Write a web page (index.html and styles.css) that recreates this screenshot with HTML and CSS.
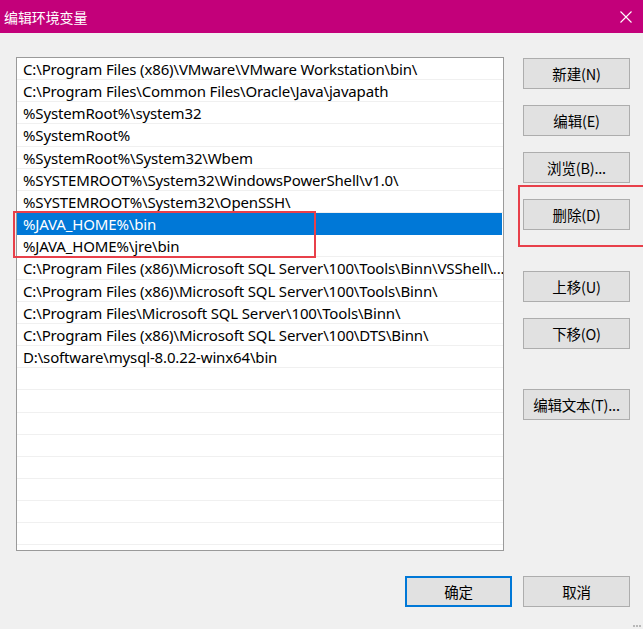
FILE: index.html
```html
<!DOCTYPE html>
<html lang="zh-CN">
<head>
    <meta charset="UTF-8">
    <title>编辑环境变量</title>
    <link rel="stylesheet" href="styles.css">
</head>
<body>
    <div class="window">
        <!-- title bar -->
        <div class="titlebar">
            <span class="title">编辑环境变量</span>
            <svg class="close" width="12" height="12" viewBox="0 0 12 12">
                <path d="M0.5 0.5 L11.5 11.5 M11.5 0.5 L0.5 11.5" stroke="#fff" stroke-width="1.1" fill="none"/>
            </svg>
        </div>

        <div class="content">
            <div class="main">
                <div class="list">
                    <div class="row">C:\Program Files (x86)\VMware\VMware Workstation\bin\</div>
                    <div class="row">C:\Program Files\Common Files\Oracle\Java\javapath</div>
                    <div class="row">%SystemRoot%\system32</div>
                    <div class="row">%SystemRoot%</div>
                    <div class="row">%SystemRoot%\System32\Wbem</div>
                    <div class="row">%SYSTEMROOT%\System32\WindowsPowerShell\v1.0\</div>
                    <div class="row">%SYSTEMROOT%\System32\OpenSSH\</div>
                    <div class="row selected">%JAVA_HOME%\bin</div>
                    <div class="row">%JAVA_HOME%\jre\bin</div>
                    <div class="row">C:\Program Files (x86)\Microsoft SQL Server\100\Tools\Binn\VSShell\...</div>
                    <div class="row">C:\Program Files (x86)\Microsoft SQL Server\100\Tools\Binn\</div>
                    <div class="row">C:\Program Files\Microsoft SQL Server\100\Tools\Binn\</div>
                    <div class="row">C:\Program Files (x86)\Microsoft SQL Server\100\DTS\Binn\</div>
                    <div class="row">D:\software\mysql-8.0.22-winx64\bin</div>
                    <div class="row"></div>
                    <div class="row"></div>
                    <div class="row"></div>
                    <div class="row"></div>
                    <div class="row"></div>
                    <div class="row"></div>
                    <div class="row"></div>
                    <div class="row last"></div>
                </div>

                <div class="side">
                    <div class="group">
                        <button class="btn">新建(N)</button>
                        <button class="btn">编辑(E)</button>
                        <button class="btn">浏览(B)...</button>
                        <button class="btn">删除(D)</button>
                    </div>
                    <div class="group moves">
                        <button class="btn">上移(U)</button>
                        <button class="btn">下移(O)</button>
                    </div>
                    <button class="btn text-btn">编辑文本(T)...</button>
                </div>
            </div>

            <div class="footer">
                <button class="btn primary">确定</button>
                <button class="btn">取消</button>
            </div>
        </div>

        <!-- red annotation boxes -->
        <div class="mark mark-list"></div>
        <div class="mark mark-btn"></div>

        <div class="grip">
            <span></span><span></span><span></span>
        </div>
    </div>
</body>
</html>
```

FILE: styles.css
```css
* {
    margin: 0;
    padding: 0;
    box-sizing: border-box;
}
body {
    width: 643px;
    height: 629px;
    overflow: hidden;
    background: #f0f0f0;
    font-family: "Noto Sans", "Noto Sans CJK SC", sans-serif;
    font-size: 15px;
    color: #000;
}
.window {
    position: relative;
    width: 643px;
    height: 629px;
    background: #f0f0f0;
}
.titlebar {
    height: 33px;
    background: #c3007a;
    display: flex;
    align-items: center;
    justify-content: space-between;
    padding: 0 10px 0 4px;
}
.title {
    color: #fff;
    font-family: "Noto Sans CJK SC", sans-serif;
    font-size: 14px;
    letter-spacing: -0.1px;
}
.close {
    margin-right: 1px;
}
.content {
    padding: 24px 13px 0 16px;
}
.main {
    display: flex;
    gap: 19px;
}
.list {
    width: 488px;
    height: 494px;
    background: #fff;
    border: 1px solid #9a9a9a;
    overflow: hidden;
}
.row {
    height: 22.17px;
    line-height: 22px;
    padding-left: 6px;
    padding-right: 6px;
    border-bottom: 1px solid #f0f0f0;
    white-space: nowrap;
    overflow: hidden;
    letter-spacing: -0.15px;
}
.row.selected {
    background: #0078d7;
    color: #fff;
    border-bottom-color: #0078d7;
    margin-right: 1px;
}
.side {
    display: flex;
    flex-direction: column;
    padding-top: 1px;
}
.group {
    display: flex;
    flex-direction: column;
    gap: 16px;
}
.moves {
    margin-top: 41px;
}
.text-btn {
    margin-top: 40px;
}
.btn {
    width: 107px;
    height: 31px;
    background: #e1e1e1;
    border: 1px solid #adadad;
    font-family: "Noto Sans CJK SC", sans-serif;
    font-size: 14.5px;
    color: #000;
    letter-spacing: -0.2px;
}
.footer {
    display: flex;
    justify-content: flex-end;
    gap: 11px;
    margin-top: 25px;
}
.btn.primary {
    border: 2px solid #0078d7;
}
.mark {
    position: absolute;
    border: 2px solid #e8404a;
}
.mark-list {
    left: 13px;
    top: 211px;
    width: 303px;
    height: 47px;
}
.mark-btn {
    left: 518px;
    top: 185px;
    width: 130px;
    height: 62px;
}
.grip {
    position: absolute;
    right: 2px;
    bottom: 2px;
    display: flex;
    gap: 1px;
}
.grip span {
    width: 2px;
    height: 2px;
    background: #b8b8b8;
}
```
